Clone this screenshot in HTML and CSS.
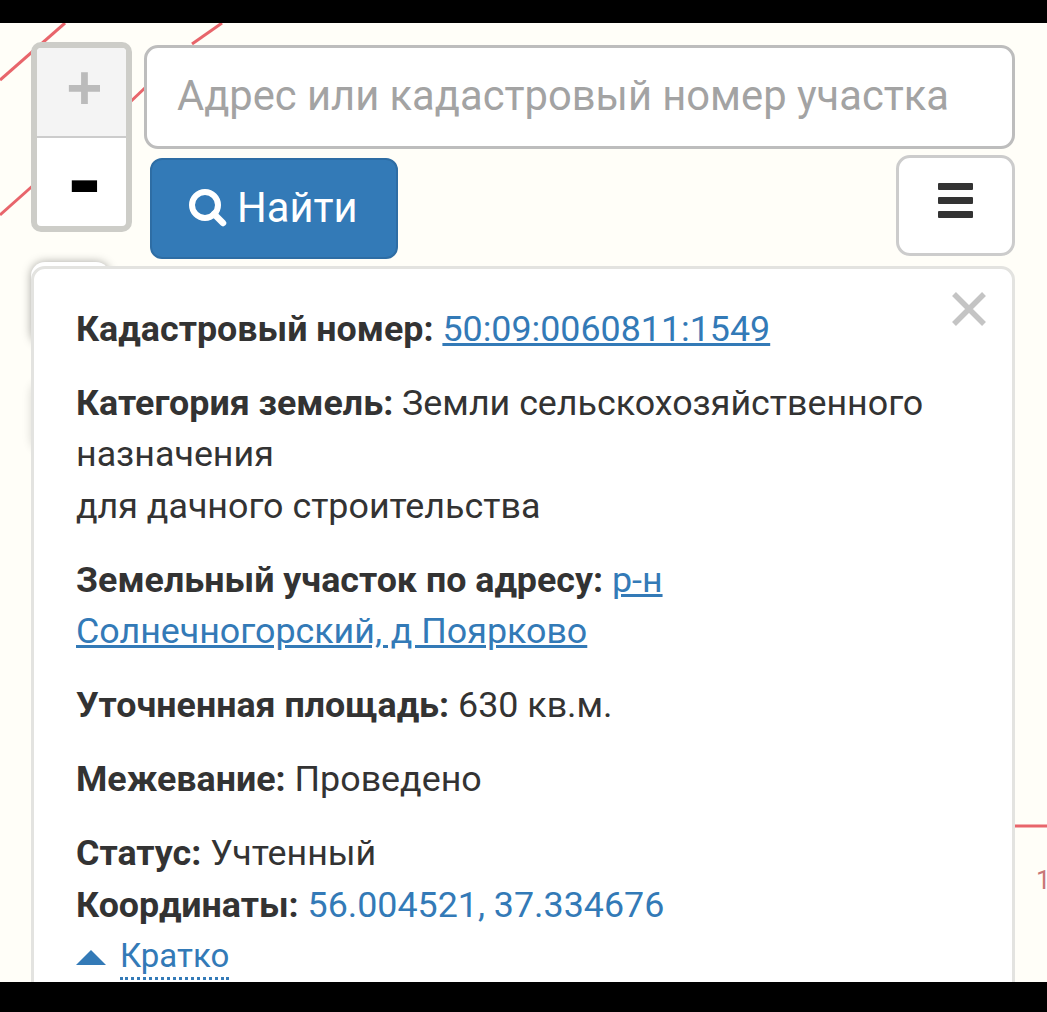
FILE: index.html
```html
<!DOCTYPE html>
<html lang="ru">
<head>
    <meta charset="UTF-8">
    <meta name="viewport" content="width=device-width, initial-scale=1.0">
    <title>Кадастровая карта</title>
    <link rel="stylesheet" href="styles.css">
</head>
<body>

    <div class="map">
        <!-- red parcel lines on the map -->
        <svg class="map-lines" width="1047" height="959" viewBox="0 23 1047 959">
            <path d="M0 80 L65 23" />
            <path d="M126 106 L148 85" />
            <path d="M192 44 L222 23" />
            <path d="M0 215 L37 182" />
            <path d="M1015 826 L1047 826" />
        </svg>
        <span class="map-label">1</span>

        <div class="top">
            <div class="zoom">
                <a class="zoom-btn zoom-in">+</a>
                <a class="zoom-btn zoom-out">-</a>
            </div>
            <div class="search">
                <input class="search-input" type="text" placeholder="Адрес или кадастровый номер участка">
                <div class="search-row">
                    <button class="btn-find">
                        <svg width="40" height="40" viewBox="0 0 40 40">
                            <circle cx="18" cy="17" r="13" fill="none" stroke="#fff" stroke-width="6" />
                            <path d="M27 26 L36 35" stroke="#fff" stroke-width="6.5" stroke-linecap="round" />
                        </svg>
                        Найти
                    </button>
                    <button class="btn-menu">
                        <span></span><span></span><span></span>
                    </button>
                </div>
            </div>
        </div>

        <!-- controls hidden behind the info panel, only their shadow shows -->
        <div class="side-tab side-tab-first"></div>
        <div class="side-tab side-tab-second"></div>

        <div class="panel">
            <svg class="close" width="36" height="36" viewBox="0 0 36 36">
                <path d="M3 3 L33 33 M33 3 L3 33" stroke="#c4c4c4" stroke-width="5.5" />
            </svg>
            <p><b>Кадастровый номер:</b> <a class="link" href="#">50:09:0060811:1549</a></p>
            <p><b>Категория земель:</b> Земли сельскохозяйственного назначения<br>для дачного строительства</p>
            <p><b>Земельный участок по адресу:</b> <a class="link" href="#">р-н Солнечногорский, д Поярково</a></p>
            <p><b>Уточненная площадь:</b> 630 кв.м.</p>
            <p><b>Межевание:</b> Проведено</p>
            <p class="last"><b>Статус:</b> Учтенный<br>
            <b>Координаты:</b> <span class="coords">56.004521, 37.334676</span></p>
            <div class="more"><i class="arrow"></i><a class="more-link">Кратко</a></div>
        </div>
    </div>

</body>
</html>
```

FILE: styles.css
```css
html, body {
    margin: 0;
    padding: 0;
    height: 100%;
    background-color: #000;
    overflow: hidden;
}
body {
    font-family: Roboto, "Liberation Sans", sans-serif;
    font-size: 35.8px;
    line-height: 51.4px;
    color: #333;
    padding-top: 23px;
    box-sizing: border-box;
}
.map {
    position: relative;
    height: 959px;
    overflow: hidden;
    background-color: #fffef8;
    padding: 19px 32px 0 31px;
    box-sizing: border-box;
}
.map-lines {
    position: absolute;
    left: 0;
    top: 0;
}
.map-lines path {
    fill: none;
    stroke: #e8656b;
    stroke-width: 3;
}
.map-label {
    position: absolute;
    left: 1036px;
    top: 842px;
    color: #c87878;
    font-size: 26px;
    line-height: 30px;
}
.top {
    position: relative;
    display: flex;
    gap: 12px;
    height: 224px;
}
.zoom {
    width: 101px;
    height: 190px;
    box-sizing: border-box;
    border: 6px solid #cdcdc8;
    border-radius: 10px;
    overflow: hidden;
    background-color: #fff;
}
.zoom-btn {
    display: block;
    height: 89px;
    padding-left: 6px;
    text-align: center;
    font-family: "DejaVu Sans Mono", monospace;
    font-weight: bold;
    font-size: 58px;
    line-height: 78px;
    color: #000;
}
.zoom-in {
    height: 88px;
    background-color: #f4f4f4;
    border-bottom: 2px solid #cccccc;
    color: #bbb;
}
.zoom-out {
    font-size: 82px;
    line-height: 88px;
}
.search {
    flex: 1;
    padding-top: 3px;
}
.search-input {
    display: block;
    width: 100%;
    height: 104px;
    box-sizing: border-box;
    padding: 0 30px 3px;
    font-family: inherit;
    font-size: 41.7px;
    color: #333;
    background-color: #fff;
    border: 3px solid #bdbdbd;
    border-radius: 14px;
    outline: none;
}
.search-input::placeholder {
    color: #a3a3a3;
    opacity: 1;
}
.search-row {
    display: flex;
    justify-content: space-between;
    align-items: flex-start;
    padding-left: 6px;
    margin-top: 6px;
}
.btn-find {
    display: flex;
    align-items: center;
    gap: 10px;
    width: 248px;
    height: 101px;
    margin-top: 3px;
    padding: 0 0 2px 35px;
    box-sizing: border-box;
    font-family: inherit;
    font-size: 41.7px;
    color: #fff;
    background-color: #337ab7;
    border: 2px solid #2e6da4;
    border-radius: 12px;
}
.btn-menu {
    display: flex;
    flex-direction: column;
    align-items: center;
    gap: 7px;
    width: 119px;
    height: 101px;
    padding: 25px 0 0;
    box-sizing: border-box;
    background-color: #fff;
    border: 3px solid #cccccc;
    border-radius: 14px;
}
.btn-menu span {
    display: block;
    width: 35px;
    height: 7px;
    background-color: #333;
    border-radius: 1px;
}
.side-tab {
    position: absolute;
    left: 31px;
    width: 79px;
    background-color: #fff;
    border-radius: 14px;
}
.side-tab-first {
    top: 239px;
    height: 83px;
    box-shadow: 0 0 10px rgba(0, 0, 0, 0.35);
}
.side-tab-second {
    top: 357px;
    height: 72px;
    box-shadow: 0 0 10px rgba(0, 0, 0, 0.15);
}
.panel {
    position: relative;
    height: 760px;
    box-sizing: border-box;
    padding: 35px 40px 0 42px;
    background-color: #fff;
    border: 3px solid #e3e3e0;
    border-radius: 14px;
}
.panel p {
    margin: 0 0 22.6px;
}
.panel p.last {
    margin-bottom: 0;
}
.panel b {
    font-weight: bold;
}
.close {
    position: absolute;
    right: 25px;
    top: 22px;
}
.link {
    color: #337ab7;
    text-decoration: underline;
}
.coords {
    color: #337ab7;
}
.more {
    display: flex;
    align-items: center;
    gap: 14px;
    padding-top: 4px;
}
.arrow {
    width: 0;
    height: 0;
    border-left: 15px solid transparent;
    border-right: 15px solid transparent;
    border-bottom: 15px solid #337ab7;
}
.more-link {
    color: #337ab7;
    font-size: 33px;
    line-height: 42px;
    border-bottom: 3px dotted #337ab7;
}
```
